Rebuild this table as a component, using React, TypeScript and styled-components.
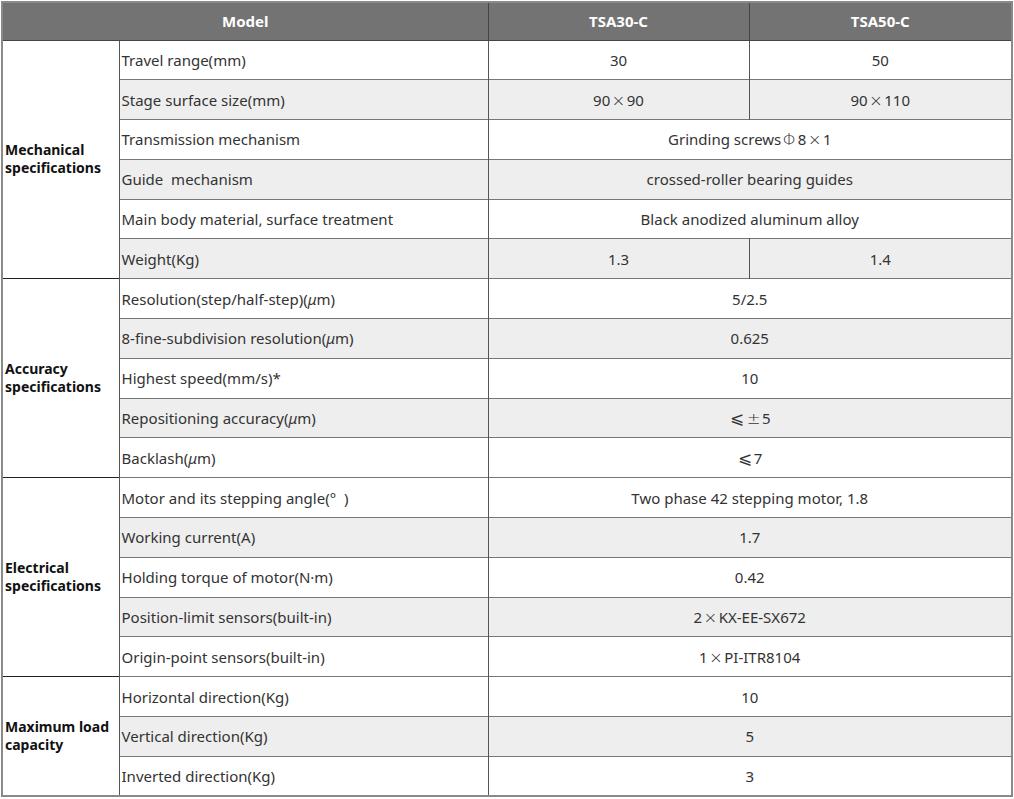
import React, { FC, ReactNode } from "react";
import styled, { createGlobalStyle } from "styled-components";

type Row = { label: string; a: string; b?: string };
type Group = { title: string; rows: Row[] };

const groups: Group[] = [
  {
    title: "Mechanical specifications",
    rows: [
      { label: "Travel range(mm)", a: "30", b: "50" },
      { label: "Stage surface size(mm)", a: "90×90", b: "90×110" },
      { label: "Transmission mechanism", a: "Grinding screwsΦ8×1" },
      { label: "Guide\u00a0 mechanism", a: "crossed-roller bearing guides" },
      { label: "Main body material, surface treatment", a: "Black anodized aluminum alloy" },
      { label: "Weight(Kg)", a: "1.3", b: "1.4" },
    ],
  },
  {
    title: "Accuracy specifications",
    rows: [
      { label: "Resolution(step/half-step)(μm)", a: "5/2.5" },
      { label: "8-fine-subdivision resolution(μm)", a: "0.625" },
      { label: "Highest speed(mm/s)*", a: "10" },
      { label: "Repositioning accuracy(μm)", a: "⩽±5" },
      { label: "Backlash(μm)", a: "⩽7" },
    ],
  },
  {
    title: "Electrical specifications",
    rows: [
      { label: "Motor and its stepping angle(°\u00a0\u00a0)", a: "Two phase 42 stepping motor, 1.8" },
      { label: "Working current(A)", a: "1.7" },
      { label: "Holding torque of motor(N·m)", a: "0.42" },
      { label: "Position-limit sensors(built-in)", a: "2×KX-EE-SX672" },
      { label: "Origin-point sensors(built-in)", a: "1×PI-ITR8104" },
    ],
  },
  {
    title: "Maximum load capacity",
    rows: [
      { label: "Horizontal direction(Kg)", a: "10" },
      { label: "Vertical direction(Kg)", a: "5" },
      { label: "Inverted direction(Kg)", a: "3" },
    ],
  },
];

// wide symbols (×, Φ, ⩽, ±) sit in a full-width box, μ is set in italics
const renderText = (text: string): ReactNode[] =>
  Array.from(text).map((ch, i) => {
    if ("×Φ⩽±".includes(ch)) return <Wide key={i}>{ch}</Wide>;
    if (ch === "μ") return <Mu key={i}>{ch}</Mu>;
    return ch;
  });

const GlobalStyle = createGlobalStyle`
  body {
    margin: 0;
    background: #ffffff;
    font-family: "Noto Sans", "Liberation Sans", sans-serif;
  }
`;

const App: FC = () => {
  return (
    <Page>
      <GlobalStyle />
      <SpecTable>
        <colgroup>
          <col style={{ width: 117 }} />
          <col style={{ width: 369 }} />
          <col style={{ width: 261 }} />
          <col style={{ width: 263 }} />
        </colgroup>
        <thead>
          <HeadRow>
            <HeadCell colSpan={2}>Model</HeadCell>
            <HeadCell>TSA30-C</HeadCell>
            <HeadCell>TSA50-C</HeadCell>
          </HeadRow>
        </thead>
        {groups.map((g) => (
          <GroupBody key={g.title}>
            {g.rows.map((r, i) => (
              <BodyRow key={r.label} $shaded={i % 2 === 1}>
                {i === 0 ? (
                  <GroupCell rowSpan={g.rows.length}>{g.title}</GroupCell>
                ) : null}
                <LabelCell>{renderText(r.label)}</LabelCell>
                {r.b !== undefined ? (
                  <>
                    <ValueCell>{renderText(r.a)}</ValueCell>
                    <ValueCell>{renderText(r.b)}</ValueCell>
                  </>
                ) : (
                  <ValueCell colSpan={2}>{renderText(r.a)}</ValueCell>
                )}
              </BodyRow>
            ))}
          </GroupBody>
        ))}
      </SpecTable>
    </Page>
  );
};

export default App;

const Page = styled.div`
  padding: 1px 0 0 1px;
`;

const SpecTable = styled.table`
  width: 1010px;
  table-layout: fixed;
  border-collapse: collapse;
  border: 2px solid #8a8a8a;
`;

const HeadRow = styled.tr`
  height: 38px;
  background: #737373;
`;

const HeadCell = styled.th`
  border: 1px solid #444;
  color: #ffffff;
  font-size: 15px;
  font-weight: 700;
  text-align: center;
  padding: 0;
`;

const GroupBody = styled.tbody`
  border-top: 1px solid #222;
`;

const BodyRow = styled.tr<{ $shaded: boolean }>`
  height: 39.8px;
  background: ${(p) => (p.$shaded ? "#eeeeee" : "#ffffff")};
`;

const GroupCell = styled.td`
  background: #ffffff;
  border-right: 1px solid #555;
  border-top: 1px solid #222;
  padding: 0 2px 0 2px;
  font-size: 14px;
  font-weight: 700;
  line-height: 18px;
  color: #111;
  vertical-align: middle;
`;

const LabelCell = styled.td`
  border-top: 1px solid #777;
  border-right: 1px solid #555;
  padding: 0 0 0 2px;
  font-size: 15px;
  color: #333;
  white-space: nowrap;
`;

const ValueCell = styled.td`
  border-top: 1px solid #777;
  border-right: 1px solid #555;
  padding: 0;
  font-size: 15px;
  color: #333;
  text-align: center;
  white-space: nowrap;
`;

const Wide = styled.span`
  display: inline-block;
  width: 1em;
  text-align: center;
  font-family: "DejaVu Sans", "Noto Sans CJK SC", sans-serif;
  font-size: 1.1em;
  line-height: 1;
  font-weight: 300;
`;

const Mu = styled.span`
  font-style: italic;
`;
